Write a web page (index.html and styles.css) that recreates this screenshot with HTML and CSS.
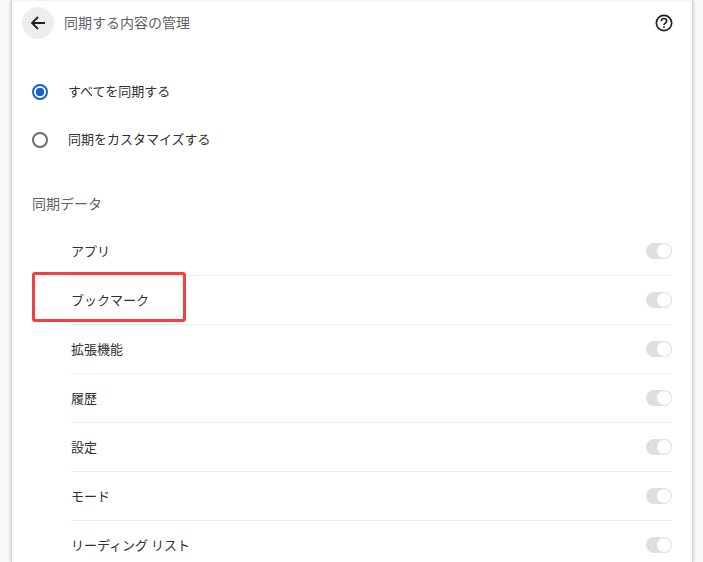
FILE: index.html
```html
<!DOCTYPE html>
<html lang="ja">

<head>
  <meta charset="UTF-8">
  <title>同期する内容の管理</title>
  <link rel="stylesheet" href="styles.css">
</head>

<body>
  <div class="card">
    <div class="header">
      <button class="back" aria-label="戻る">
        <svg width="16" height="16" viewBox="0 0 16 16">
          <path d="M15 8H2M8 2L2 8l6 6" fill="none" stroke="#202124" stroke-width="1.8" />
        </svg>
      </button>
      <span class="title">同期する内容の管理</span>
      <svg class="help" width="20" height="20" viewBox="0 0 24 24">
        <circle cx="12" cy="12" r="9.2" fill="none" stroke="#202124" stroke-width="2" />
        <path d="M8.8 9.8a3.2 3.2 0 0 1 6.4 0c0 2.2-3.2 2.4-3.2 4.6" fill="none" stroke="#202124" stroke-width="2" />
        <rect x="11" y="15.8" width="2" height="2" fill="#202124" />
      </svg>
    </div>

    <div class="radios">
      <div class="radio-row">
        <span class="radio checked"></span>
        <span class="radio-label">すべてを同期する</span>
      </div>
      <div class="radio-row">
        <span class="radio"></span>
        <span class="radio-label">同期をカスタマイズする</span>
      </div>
    </div>

    <div class="section-title">同期データ</div>

    <div class="list">
      <div class="row"><span class="row-label">アプリ</span><span class="toggle"></span></div>
      <div class="row"><span class="row-label">ブックマーク</span><span class="toggle"></span></div>
      <div class="row"><span class="row-label">拡張機能</span><span class="toggle"></span></div>
      <div class="row"><span class="row-label">履歴</span><span class="toggle"></span></div>
      <div class="row"><span class="row-label">設定</span><span class="toggle"></span></div>
      <div class="row"><span class="row-label">モード</span><span class="toggle"></span></div>
      <div class="row"><span class="row-label">リーディング リスト</span><span class="toggle"></span></div>
    </div>
  </div>

  <div class="highlight"></div>
</body>

</html>
```

FILE: styles.css
```css
html,
body {
  height: 100%;
}

body {
  margin: 0;
  overflow: hidden;
  background: #f8f9fa;
  font-family: "Noto Sans CJK JP", "Noto Sans", sans-serif;
  color: #303134;
  font-size: 13px;
}

.card {
  margin: 0 11px 0 12px;
  height: 562px;
  background: #fff;
  border-top: 1px solid #f1f1f1;
  box-shadow: 0 0 3px 1px rgba(60, 64, 67, 0.3);
  overflow: hidden;
}

.header {
  display: flex;
  align-items: center;
  height: 32px;
  padding: 6px 18px 0 10px;
}

.back {
  display: flex;
  align-items: center;
  justify-content: center;
  width: 32px;
  height: 32px;
  padding: 0;
  border: 0;
  border-radius: 50%;
  background: #eeeeee;
}

.title {
  flex: 1;
  margin-left: 10px;
  padding-bottom: 3px;
  font-size: 14px;
  color: #5f6368;
}

.radios {
  padding-top: 29px;
}

.radio-row {
  display: flex;
  align-items: center;
  height: 48px;
  padding-left: 20px;
}

.radio {
  box-sizing: border-box;
  width: 16px;
  height: 16px;
  border: 2px solid #6e6e6e;
  border-radius: 50%;
}

.radio.checked {
  border-color: #1a5fd0;
  background: radial-gradient(circle, #1a5fd0 0 4px, #fff 4.6px);
}

.radio-label {
  margin-left: 20px;
  padding-bottom: 4px;
}

.section-title {
  margin-top: 29px;
  padding-left: 20px;
  font-size: 14px;
  line-height: 20px;
  color: #5f6368;
}

.list {
  margin-top: 14px;
  padding: 0 20px 0 59px;
}

.row {
  display: flex;
  align-items: center;
  justify-content: space-between;
  box-sizing: border-box;
  height: 49px;
  border-bottom: 1px solid #eeeeee;
}

.row-label {
  padding-bottom: 2px;
}

.toggle {
  position: relative;
  width: 26px;
  height: 16px;
  border-radius: 8px;
  background: #dfdfdf;
}

.toggle::after {
  content: "";
  position: absolute;
  top: 1px;
  right: 1px;
  width: 14px;
  height: 14px;
  border-radius: 50%;
  background: #fff;
}

.highlight {
  position: absolute;
  left: 32px;
  top: 272px;
  width: 154px;
  height: 50px;
  box-sizing: border-box;
  border: 3px solid #f44040;
  border-radius: 3px;
}
```
